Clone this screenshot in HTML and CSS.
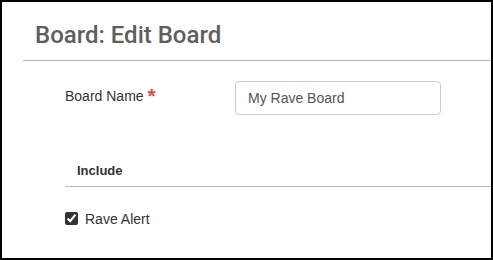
FILE: index.html
```html
<!DOCTYPE html>
<html>
<head>
<meta charset="utf-8">
<link rel="stylesheet" href="styles.css">
</head>
<body>
<div class="page">
  <div class="header">
    <h1 class="title">Board: Edit Board</h1>
  </div>
  <div class="form-row">
    <label class="label" for="bn">Board Name <span class="req">*</span></label>
    <input class="input" id="bn" type="text" value="My Rave Board">
  </div>
  <div class="section">
    <div class="section-head">Include</div>
    <label class="check-row">
      <input class="check" type="checkbox" checked>
      <span class="check-text">Rave Alert</span>
    </label>
  </div>
</div>
</body>
</html>
```

FILE: styles.css
```css
html, body {
  margin: 0;
  padding: 0;
}
body {
  width: 493px;
  height: 260px;
  box-sizing: border-box;
  border: 2px solid #000;
  background: #fff;
  font-family: "Liberation Sans", Arial, sans-serif;
  font-size: 14px;
  color: #333;
  overflow: hidden;
}
.page {
  padding-left: 21px;
}
.header {
  border-bottom: 1px solid #b4b4b4;
  padding: 19px 0 11px 12px;
}
.title {
  margin: 0;
  font-family: Roboto, "Liberation Sans", sans-serif;
  font-size: 24px;
  font-weight: 500;
  line-height: 28px;
  color: #5e5e5e;
}
.form-row {
  display: flex;
  align-items: flex-start;
  margin-top: 20px;
  padding-left: 42px;
}
.label {
  width: 170px;
  padding-top: 5px;
  line-height: 20px;
  color: #333;
}
.req {
  color: #e0474c;
  font-size: 21px;
  font-weight: bold;
  vertical-align: top;
  line-height: 18px;
  position: relative;
  top: 1px;
}
.input {
  box-sizing: border-box;
  width: 206px;
  height: 34px;
  margin: 0;
  padding: 6px 12px;
  border: 1px solid #ccc;
  border-radius: 4px;
  font-family: "Liberation Sans", Arial, sans-serif;
  font-size: 14px;
  line-height: 20px;
  color: #555;
  outline: none;
}
.section {
  margin-top: 46px;
  margin-left: 42px;
}
.section-head {
  border-bottom: 1px solid #bbb;
  padding: 0 0 5px 12px;
  font-size: 13px;
  font-weight: bold;
  line-height: 20px;
  color: #333;
}
.check-row {
  display: flex;
  align-items: flex-start;
  margin-top: 22px;
  line-height: 20px;
}
.check {
  width: 13px;
  height: 13px;
  margin: 3px 7px 0 0;
  accent-color: #333;
}
```
